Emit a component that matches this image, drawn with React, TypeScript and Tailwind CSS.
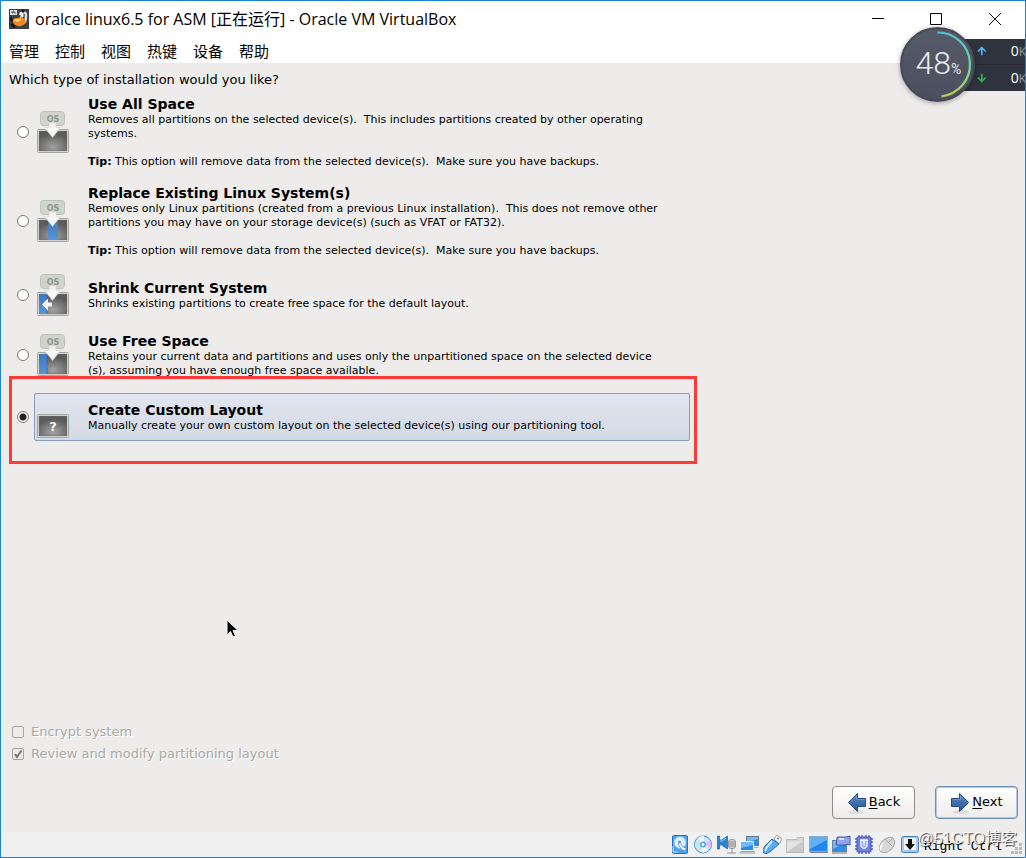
import type { ReactNode } from 'react'
import { ArrowDown, ArrowUp } from 'lucide-react'

type Kind = 'all' | 'replace' | 'shrink' | 'free' | 'custom'

type Option = {
  kind: Kind
  title: string
  text: ReactNode
  tip?: string
}

const menus = ['管理', '控制', '视图', '热键', '设备', '帮助']

const backupTip = 'This option will remove data from the selected device(s).\u00a0 Make sure you have backups.'

const options: Option[] = [
  {
    kind: 'all',
    title: 'Use All Space',
    text: 'Removes all partitions on the selected device(s).\u00a0 This includes partitions created by other operating systems.',
    tip: backupTip,
  },
  {
    kind: 'replace',
    title: 'Replace Existing Linux System(s)',
    text: 'Removes only Linux partitions (created from a previous Linux installation).\u00a0 This does not remove other partitions you may have on your storage device(s) (such as VFAT or FAT32).',
    tip: backupTip,
  },
  {
    kind: 'shrink',
    title: 'Shrink Current System',
    text: 'Shrinks existing partitions to create free space for the default layout.',
  },
  {
    kind: 'free',
    title: 'Use Free Space',
    text: (
      <>
        Retains your current data and partitions and uses only the unpartitioned space on the selected device
        <wbr />
        (s), assuming you have enough free space available.
      </>
    ),
  },
]

const custom: Option = {
  kind: 'custom',
  title: 'Create Custom Layout',
  text: 'Manually create your own custom layout on the selected device(s) using our partitioning tool.',
}

function DiskIcon({ kind }: { kind: Kind }) {
  return (
    <svg width="32" height="44" viewBox="0 0 32 44" className="shrink-0" aria-hidden="true">
      <defs>
        <radialGradient id={`disk-${kind}`} cx="0.5" cy="0.8" r="0.65">
          <stop offset="0" stopColor="#a2a2a2" />
          <stop offset="1" stopColor="#5c5c5c" />
        </radialGradient>
        <linearGradient id={`part-${kind}`} x1="0" y1="0" x2="0" y2="1">
          <stop offset="0" stopColor="#3d78bd" />
          <stop offset="1" stopColor="#5b95d6" />
        </linearGradient>
        <linearGradient id={`drop-${kind}`} x1="0" y1="0" x2="0" y2="1">
          <stop offset="0" stopColor="#e9eae7" />
          <stop offset="0.4" stopColor="#f8f8f7" />
          <stop offset="1" stopColor="#f4f4f2" />
        </linearGradient>
      </defs>
      {kind !== 'custom' && (
        <>
          <rect x="3.5" y="1.5" width="24" height="14" rx="3" fill="#d0d5cb" stroke="#bcc2b8" />
          <text x="16" y="11.5" textAnchor="middle" fontSize="8" fontWeight="bold" fill="#8f958c" className="font-['DejaVu_Sans',sans-serif]">
            OS
          </text>
        </>
      )}
      <rect x="0.5" y="19.5" width="31" height="23" rx="1" fill="#f1f1ec" stroke="#a4a7a0" />
      <rect x="2" y="21" width="28" height="20" fill={`url(#disk-${kind})`} stroke="#6b6b6b" strokeWidth="0.5" />
      {kind === 'replace' && <rect x="11" y="21" width="10" height="20" fill={`url(#part-${kind})`} />}
      {(kind === 'shrink' || kind === 'free') && (
        <>
          <rect x="2" y="21" width="8" height="20" fill={`url(#part-${kind})`} />
          <path d="M10 21v20" stroke="#3f638c" strokeWidth="0.7" />
        </>
      )}
      {kind === 'shrink' && <path d="M5 31.5l6-6v4h4v4h-4v4z" fill="#f4f4f2" />}
      {kind !== 'custom' && <path d="M12 12.5h7v5h4.5l-8 10-8-10H12z" fill={`url(#drop-${kind})`} stroke="#d3d5cf" strokeWidth="0.6" />}
      {kind === 'custom' && (
        <text x="16" y="36" textAnchor="middle" fontSize="13" fontWeight="bold" fill="#f4f4f4" className="font-['DejaVu_Sans',sans-serif]">
          ?
        </text>
      )}
    </svg>
  )
}

function OptionRow({ option, selected = false }: { option: Option; selected?: boolean }) {
  return (
    <label className="flex items-center gap-[5px]">
      <input
        type="radio"
        name="layout"
        defaultChecked={selected}
        className="size-3 shrink-0 appearance-none rounded-full border border-[#777] bg-white checked:bg-[radial-gradient(circle,#222_0_3px,white_4px)]"
      />
      <span
        className={
          selected
            ? 'flex min-h-12 flex-1 items-center gap-[19px] rounded-xs border border-[#869dbd] bg-linear-to-b from-[#e1e5ee] to-[#d3dae6] pl-0.5'
            : 'flex flex-1 items-center gap-[19px] border-x border-transparent pl-0.5'
        }
      >
        <DiskIcon kind={option.kind} />
        <span className="block flex-1 pr-6 text-[11px] leading-[14px]">
          <span className="block text-sm leading-[18px] font-bold">{option.title}</span>
          <span className="block">{option.text}</span>
          {option.tip && (
            <span className="mt-3.5 block">
              <b>Tip:</b> {option.tip}
            </span>
          )}
        </span>
      </span>
    </label>
  )
}

function BigArrow({ flip = false }: { flip?: boolean }) {
  return (
    <svg width="20" height="22" viewBox="0 0 20 22" className={flip ? 'rotate-y-180' : ''} aria-hidden="true">
      <defs>
        <linearGradient id="arrow" x1="0" y1="0" x2="0" y2="1">
          <stop offset="0" stopColor="#5584bb" />
          <stop offset="1" stopColor="#2c5b9d" />
        </linearGradient>
      </defs>
      <ellipse cx="11" cy="20" rx="8" ry="2" fill="#000" opacity="0.08" />
      <path d="M1.5 6.5h8v-5l9 9-9 9v-5h-8z" fill="url(#arrow)" stroke="#204a87" />
      <path d="M2.5 7.5h8V4l6.5 6.5" fill="none" stroke="#8fb1d9" opacity="0.5" />
    </svg>
  )
}

function TuxIcon() {
  return (
    <svg width="20" height="20" viewBox="0 0 20 20" aria-hidden="true">
      <rect width="20" height="20" fill="#3b4048" />
      <path d="M11 6c1-5 7-3 6 1 0 3 0 5-2 7" fill="none" stroke="#dcdcdc" strokeWidth="2.5" />
      <path d="M1 9l4 4M2 15l4 3M13 3l2-2" stroke="#171a1e" strokeWidth="3" />
      <path d="M4 11c1-3 5-1 7-3 1-2 3-1 3 1 2 0 3 3 2 5-2 4-8 4-11 1-1-1-2-3-1-4z" fill="#ee8b1c" />
      <path d="M5 11c2-2 5 0 7-2 1 3-4 5-7 2z" fill="#ffd08a" />
      <path d="M13 4v4" stroke="#f2f2f2" strokeWidth="3" />
      <rect x="1" y="1" width="7" height="5" fill="#e3e5e7" />
      <path d="M2 3h1v1h1V2h1v2h2" fill="none" stroke="#535960" />
    </svg>
  )
}

const statusIcons: { name: string; art: ReactNode }[] = [
  {
    name: 'Hard disk',
    art: (
      <>
        <rect x="1.5" y=".5" width="15" height="18" rx="1" fill="#4ba1ed" stroke="#2474c4" />
        <circle cx="9" cy="7.5" r="6" fill="#dff0ff" stroke="#8bc0f0" />
        <path d="M9 7l-2 2 4 6 4 1v-3l-3-1z" fill="#fff" stroke="#3b8ddd" strokeWidth=".8" />
        <circle cx="8.5" cy="7" r="1.5" fill="#559ee2" />
        <path d="M2 11v6h5" fill="none" stroke="#c2e2ff" />
      </>
    ),
  },
  {
    name: 'Optical disc',
    art: (
      <>
        <circle cx="9" cy="9.5" r="8.5" fill="#cfe2f8" stroke="#3f91dc" />
        <path d="M9 9.5 4 3a8 8 0 0 1 6-2z" fill="#f4fbff" />
        <path d="M9 9.5 16 6a8 8 0 0 1 1 6z" fill="#efb5f3" />
        <path d="M9 9.5 2 6a8 8 0 0 0-1 6z" fill="#b7f0d7" />
        <path d="m9 9.5 5 6.5a8 8 0 0 1-7 1z" fill="#fff" />
        <circle cx="9" cy="9.5" r="3" fill="#55a4e9" />
        <circle cx="9" cy="9.5" r="1.4" fill="#fff" />
      </>
    ),
  },
  {
    name: 'Audio',
    art: (
      <>
        <path d="M.5 1h2v4h2l6-4v13l-6-4h-2v4h-2z" fill="#2b83cf" stroke="#1765ae" strokeWidth=".7" />
        <path d="M3 6h2l4-3" fill="none" stroke="#9dd0fa" />
        <rect x="11.5" y="4.5" width="7" height="9" rx="2.5" fill="#d2d2d2" stroke="#999" />
        <path d="M12 7h6M12 9h6M12 11h6M15 14v4M10 18h9" stroke="#909090" />
      </>
    ),
  },
  {
    name: 'Network',
    art: (
      <>
        <rect x="6.5" y="1.5" width="12" height="9" fill="#2d8ce9" stroke="#677788" />
        <path d="M7 2h11v2L7 7z" fill="#73b9fb" />
        <path d="M13 12h5l1 1h-6z" fill="#a4abb2" />
        <rect x=".5" y="6.5" width="13" height="9" fill="#258bec" stroke="#f4f8fb" />
        <path d="M1 7h12v3L1 13z" fill="#73b9fb" />
        <path d="M1 16.5h13l1 1.5H0z" fill="#e8ecef" stroke="#77838d" strokeWidth=".7" />
      </>
    ),
  },
  {
    name: 'USB',
    art: (
      <>
        <path d="m11 4 3-4 5 4-3 5z" fill="#f5f5f5" stroke="#888" strokeWidth=".8" />
        <path d="M9 4 16 9 9 15Q4 20 1 18t1-7z" fill="#5ea8f4" stroke="#236fbb" />
        <path d="M9 6 4 12q-2 3-1 4" fill="none" stroke="#d1edff" strokeWidth="2" />
        <path d="m14 3 2 1" stroke="#555" />
      </>
    ),
  },
  {
    name: 'Shared folders',
    art: (
      <>
        <path d="M.5 17.5v-13h10l1-2h6v15z" fill="#d6d6d6" stroke="#bbb" />
        <path d="M1 17V7l16-1v11z" fill="#e4e4e4" />
        <path d="m1 17 16-11v11z" fill="#c9c9c9" />
      </>
    ),
  },
  {
    name: 'Display',
    art: (
      <>
        <rect x=".5" y="1.5" width="18" height="15" fill="#2386e8" stroke="#8dafd0" />
        <path d="M1 2h17v3L1 14z" fill="#63aff6" />
        <path d="M1 17.5h18" stroke="#767f88" />
      </>
    ),
  },
  {
    name: 'Video capture',
    art: (
      <>
        <rect x=".5" y="5.5" width="14" height="11" fill="#2e8ceb" stroke="#6883a0" />
        <path d="M1 6h8v4l-8 4z" fill="#73b8f8" />
        <path d="M0 18h15" stroke="#777" />
        <path d="M5 3q0-1 1-1h8l4-1v9l-4-1v1H4z" fill="#91a7ed" stroke="#4454a8" />
        <path d="M7 3h5v2H7z" fill="#dce3ff" />
      </>
    ),
  },
  {
    name: 'Features',
    art: (
      <>
        <path d="M4 0v19M7 0v19M11 0v19M14 0v19M0 4h18M0 7h18M0 11h18M0 14h18" stroke="#5665c8" strokeWidth="1.4" />
        <rect x="2" y="2" width="14" height="15" rx="1" fill="#6e85df" stroke="#4351b4" />
        <path d="M6 5v6q3 5 6 0V5zM9 5v6" fill="#91a7f6" stroke="#fff" strokeWidth="1.3" />
      </>
    ),
  },
  {
    name: 'Mouse integration',
    art: (
      <>
        <ellipse cx="9" cy="10" rx="6" ry="9" transform="rotate(45 9 10)" fill="#d7d7d7" stroke="#aaa" />
        <path d="m7 4 7 7M11 7l4-4" stroke="#a5a5a5" />
        <path d="M5 8q-4 5-2 7" fill="none" stroke="#fff" strokeWidth="1.5" />
      </>
    ),
  },
  {
    name: 'Keyboard capture',
    art: (
      <>
        <rect x=".5" y="1.5" width="17" height="16" rx="2" fill="#a9c8ea" stroke="#477fb8" />
        <rect x="3" y="3" width="12" height="12" rx="1" fill="#edf4fb" />
        <path d="M7 4h4v5h3l-5 6-5-6h3z" fill="#111" />
      </>
    ),
  },
]

function SpeedWidget() {
  return (
    <aside className="absolute top-[26px] -right-px flex h-[75px] w-[126px] items-center text-white" aria-label="Network speed">
      <div className="ml-9 flex-1 overflow-hidden bg-[#2e333e] pl-9 text-sm font-['Open_Sans',sans-serif]">
        <div className="flex h-[26px] items-center border-b border-[#242831]">
          <ArrowUp className="ml-1 size-3 text-[#4eb5f4]" strokeWidth={3.5} />
          <span className="ml-[23px] whitespace-nowrap">
            0<span className="text-xs text-[#969aa3]">K</span>
          </span>
        </div>
        <div className="flex h-[26px] items-center">
          <ArrowDown className="ml-1 size-3 text-[#2cb842]" strokeWidth={3.5} />
          <span className="ml-[23px] whitespace-nowrap">
            0<span className="text-xs text-[#969aa3]">K</span>
          </span>
        </div>
      </div>
      <div className="absolute left-0 flex size-[75px] items-center justify-center rounded-full border-2 border-[#454955] bg-linear-to-b from-[#565b69] to-[#4a4e5e] shadow-[0_1px_5px_rgba(0,0,0,0.35)]">
        <svg className="absolute" width="75" height="75" viewBox="0 0 75 75" aria-hidden="true">
          <defs>
            <linearGradient id="ring" x1="0" y1="0" x2="0" y2="1">
              <stop offset="0" stopColor="#4dc9d4" />
              <stop offset="0.5" stopColor="#70d6a6" />
              <stop offset="1" stopColor="#b6cb50" />
            </linearGradient>
          </defs>
          <path d="M37.5 5.5a32 32 0 0 1 4 63.8" fill="none" stroke="url(#ring)" strokeWidth="2.2" />
        </svg>
        <span className="flex items-baseline pb-1 pl-0.5 font-['Roboto',sans-serif] text-[32px] font-light text-[#e8e9ed]">
          48<span className="text-sm font-normal">%</span>
        </span>
      </div>
    </aside>
  )
}

export default function App() {
  return (
    <div className="relative flex min-h-screen flex-col overflow-hidden border border-[#1883d7] bg-[#edeceb] font-['DejaVu_Sans',sans-serif] text-black">
      <header className="bg-white font-['Open_Sans','Noto_Sans_CJK_SC',sans-serif]">
        <div className="flex h-9 items-center pl-2">
          <TuxIcon />
          <h1 className="ml-[6px] flex-1 text-base whitespace-nowrap">oralce linux6.5 for ASM [正在运行] - Oracle VM VirtualBox</h1>
          <div className="flex">
            <button className="flex h-9 w-[58px] items-center justify-center" aria-label="Minimize">
              <svg width="12" height="12" stroke="#000" aria-hidden="true">
                <path d="M0 5.5h12" />
              </svg>
            </button>
            <button className="flex h-9 w-[58px] items-center justify-center" aria-label="Maximize">
              <svg width="12" height="12" stroke="#000" fill="none" aria-hidden="true">
                <path d="M.5.5h11v11H.5z" />
              </svg>
            </button>
            <button className="flex h-9 w-[60px] items-center justify-center" aria-label="Close">
              <svg width="12" height="12" stroke="#000" aria-hidden="true">
                <path d="M0 0l12 12M12 0 0 12" />
              </svg>
            </button>
          </div>
        </div>
        <nav className="flex h-[26px] items-center gap-4 pt-0.5 pl-2 text-[15px]">
          {menus.map((menu) => (
            <button key={menu}>{menu}</button>
          ))}
        </nav>
      </header>

      <main className="flex flex-1 flex-col pt-[9px] pl-2">
        <fieldset className="max-w-[688px]">
          <legend className="mb-[7px] text-[13px] leading-4">Which type of installation would you like?</legend>
          <div className="flex max-h-[281px] flex-col gap-[15px] overflow-hidden pr-[7px] pl-2">
            {options.map((option) => (
              <OptionRow key={option.kind} option={option} />
            ))}
          </div>
          <div className="border-3 border-[#ff3838] pt-3.5 pr-1 pb-5 pl-[5px]">
            <OptionRow option={custom} selected />
          </div>
        </fieldset>

        <div className="mt-auto flex flex-col gap-1.5 pl-[3px] text-[13px] leading-4 text-[#a9a8a5]">
          <label className="flex items-center gap-[7px] text-shadow-[1px_1px_0_white]">
            <input type="checkbox" disabled className="size-3 appearance-none rounded-xs border border-[#a6a5a2]" />
            Encrypt system
          </label>
          <label className="flex items-center gap-[7px] text-shadow-[1px_1px_0_white]">
            <span className="relative flex">
              <input type="checkbox" disabled defaultChecked className="size-3 appearance-none rounded-xs border border-[#a6a5a2]" />
              <svg className="absolute inset-0" width="12" height="12" viewBox="0 0 12 12" aria-hidden="true">
                <path d="m3 6 2 3 4.5-6.5" fill="none" stroke="#777" strokeWidth="2" />
              </svg>
            </span>
            Review and modify partitioning layout
          </label>
        </div>

        <div className="mt-6 mb-[13px] flex justify-end gap-5 pr-[7px] text-[13px] leading-4">
          <button className="flex h-[33px] w-[83px] items-center justify-center gap-0.5 rounded-sm border border-[#8f8c89] bg-linear-to-b from-white to-[#eeedeb]">
            <BigArrow flip />
            <span className="pb-0.5">
              <u className="underline-offset-2">B</u>ack
            </span>
          </button>
          <button className="flex h-[33px] w-[83px] items-center justify-center gap-0.5 rounded-sm border border-[#6d8fbb] bg-linear-to-b from-white to-[#eeedeb] inset-ring inset-ring-[#b4c7df]">
            <BigArrow />
            <span className="pb-0.5">
              <u className="underline-offset-2">N</u>ext
            </span>
          </button>
        </div>
      </main>

      <footer className="relative flex h-[25px] items-center justify-end bg-[#f0f0f0] pr-[21px]">
        <div className="flex gap-1 pr-1">
          {statusIcons.map((icon) => (
            <svg key={icon.name} width="19" height="19" viewBox="0 0 19 19" role="img" aria-label={icon.name}>
              {icon.art}
            </svg>
          ))}
        </div>
        <span className="pt-1 pr-0.5 font-['Liberation_Mono',monospace] text-[13px]">Right Ctrl</span>
        <svg className="absolute right-0.5 bottom-0.5" width="12" height="12" viewBox="0 0 12 12" fill="#bbb" aria-hidden="true">
          <path d="M8 0h3v3H8zM4 4h3v3H4zM8 4h3v3H8zM0 8h3v3H0zM4 8h3v3H4zM8 8h3v3H8z" />
        </svg>
        <span className="absolute right-2 bottom-1.5 font-['Liberation_Sans','Noto_Sans_CJK_SC',sans-serif] text-base whitespace-nowrap text-white/90 text-shadow-[1px_1px_1px_rgba(0,0,0,0.8)]">
          @51CTO博客
        </span>
      </footer>

      <SpeedWidget />

      <svg className="absolute top-[618px] left-[225px]" width="13" height="20" viewBox="0 0 13 20" aria-hidden="true">
        <path d="M1 1v15l3.5-3.5L7 18l2.5-1L7 11.5h5z" fill="#000" stroke="#fff" />
      </svg>
    </div>
  )
}
